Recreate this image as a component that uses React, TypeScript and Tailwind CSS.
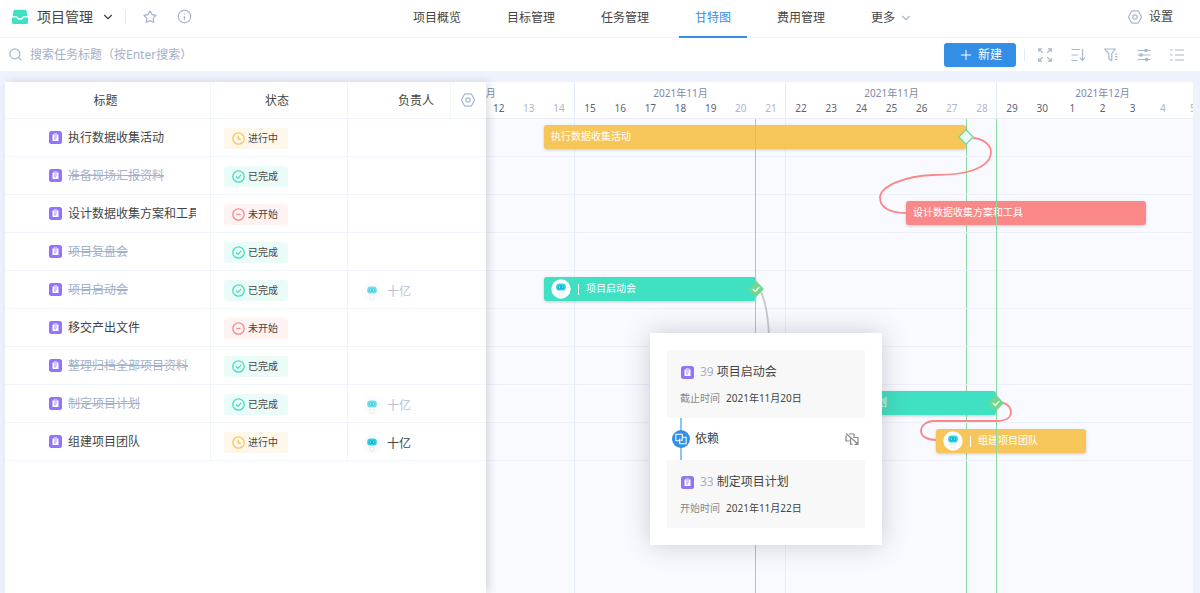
import { useState } from 'react'
import type { ReactNode } from 'react'
import { ChevronDown, Info, Plus, Search, Star } from 'lucide-react'

type Status = 'doing' | 'done' | 'todo'

interface Task {
  id: number
  title: string
  status: Status
  owner?: string
  bar?: { left: number; width: number; milestone?: boolean }
}

const tasks: Task[] = [
  { id: 31, title: '执行数据收集活动', status: 'doing', bar: { left: 58, width: 422, milestone: true } },
  { id: 32, title: '准备现场汇报资料', status: 'done' },
  { id: 34, title: '设计数据收集方案和工具', status: 'todo', bar: { left: 420, width: 240 } },
  { id: 35, title: '项目复盘会', status: 'done' },
  { id: 39, title: '项目启动会', status: 'done', owner: '十亿', bar: { left: 58, width: 212, milestone: true } },
  { id: 36, title: '移交产出文件', status: 'todo' },
  { id: 37, title: '整理归档全部项目资料', status: 'done' },
  { id: 33, title: '制定项目计划', status: 'done', owner: '十亿', bar: { left: 299, width: 211, milestone: true } },
  { id: 38, title: '组建项目团队', status: 'doing', owner: '十亿', bar: { left: 450, width: 150 } },
]

// the first week is scrolled half out of view, its hidden days stay blank
const weeks = [
  { month: '2021年11月', days: ['', '', '', '', '12', '13', '14'] },
  { month: '2021年11月', days: ['15', '16', '17', '18', '19', '20', '21'] },
  { month: '2021年11月', days: ['22', '23', '24', '25', '26', '27', '28'] },
  { month: '2021年12月', days: ['29', '30', '1', '2', '3', '4', '5'] },
]

const weekBox = [
  'w-[88px] justify-end',
  'w-[211px] border-l',
  'w-[211px] border-l',
  'min-w-0 flex-1 border-l',
]

const statusMap = {
  doing: { label: '进行中', pill: 'bg-[#fef8ec]', icon: 'text-[#f8c55a]', bar: 'bg-[#f7c65a]' },
  done: { label: '已完成', pill: 'bg-[#ebfcf8]', icon: 'text-[#40dfc0]', bar: 'bg-[#40e0c2]' },
  todo: { label: '未开始', pill: 'bg-[#fff2f2]', icon: 'text-[#fb8787]', bar: 'bg-[#fb8888]' },
}

const tabs = ['项目概览', '目标管理', '任务管理', '甘特图', '费用管理']

function LogoIcon() {
  return (
    <svg className="h-4 w-4" viewBox="0 0 16 16">
      <path d="M2.6 .8h10.800c.5 0 .9.300 1 .800L15.500 7.300H11.400c-.4 0-.8.300-1 .700-.4.900-1.200 1.400-2.400 1.400s-2-.5-2.400-1.400c-.2-.4-.6-.7-1-.7H.5l1.100-5.700c.1-.5.5-.8 1-.8z" fill="#40e0c2" />
      <path d="M0 8.500h4.400c.6 1.500 1.900 2.300 3.600 2.300s3-.8 3.600-2.300H16v5c0 .8-.7 1.500-1.500 1.500h-13C.7 15 0 14.300 0 13.500z" fill="#40e0c2" />
    </svg>
  )
}

function HexIcon() {
  return (
    <svg className="h-3.5 w-3.5" viewBox="0 0 14 14" fill="none" stroke="currentColor" strokeWidth="1.200" strokeLinejoin="round">
      <path d="M4.200 .9h5.600c.3 0 .5.100.7.400l2.700 5c.3.500.3.900 0 1.400l-2.700 5c-.2.300-.4.400-.7.400H4.200c-.3 0-.5-.1-.7-.4L.8 7.700c-.3-.5-.3-.9 0-1.400l2.700-5c.2-.3.400-.4.700-.4z" />
      <circle cx="7" cy="7" r="2.200" />
    </svg>
  )
}

function TaskIcon() {
  return (
    <svg className="h-[13px] w-[13px] shrink-0" viewBox="0 0 13 13">
      <rect width="13" height="13" rx="2.500" fill="#9373fd" />
      <path d="M3.500 3.500h1.300v-.9h3.400v.9h1.300v6.600h-6z" fill="#fff" />
      <path d="M5 3.900h3M5 6h3.100M5 7.900h2" stroke="#9373fd" strokeWidth=".8" />
    </svg>
  )
}

function StatusIcon({ status }: { status: Status }) {
  return (
    <svg
      className={`h-[13px] w-[13px] shrink-0 ${statusMap[status].icon}`}
      viewBox="0 0 13 13"
      fill="none"
      stroke="currentColor"
      strokeWidth="1.300"
    >
      <circle cx="6.500" cy="6.500" r="5.700" />
      {status === 'doing' && <path d="M6.200 3.700v3.200h2.700" strokeWidth="1.500" />}
      {status === 'done' && <path d="M4 6.500l1.900 1.900 3.300-3.500" />}
      {status === 'todo' && <path d="M4.400 6.500h4.200" />}
    </svg>
  )
}

function Avatar({ faded = false, fill = '#fafafa' }: { faded?: boolean; fill?: string }) {
  return (
    <svg className={`h-5 w-5 shrink-0 ${faded ? 'opacity-70' : ''}`} viewBox="0 0 20 20">
      <circle cx="10" cy="10" r="9.700" fill={fill} />
      <rect x="5.200" y="4.600" width="9.600" height="7" rx="3.200" fill="#2dd3e3" />
      <rect x="6.700" y="6.400" width="6.600" height="3.600" rx="1.800" fill="#13b3cf" />
      <path d="M8.400 7.500v1.200M11.600 7.500v1.200" stroke="#b5fbff" strokeWidth="1" />
      <path d="M7.800 13.300h4.400l-.5 3.200c-1 .7-2.400.7-3.400 0z" fill="#fff" stroke="#dde4ea" strokeWidth=".7" />
    </svg>
  )
}

function LinkIcon({ broken = false }: { broken?: boolean }) {
  return (
    <svg className={broken ? 'h-3.5 w-3.5' : 'h-3 w-3'} viewBox="0 0 14 14" fill="none" stroke="currentColor" strokeWidth="1.200">
      {broken ? (
        <path d="M4 2h5v3.500h4v6.800H9.500M1 3.500V9h3.500M5.500 6.500v5.700h2M1 1.500l12.500 11" />
      ) : (
        <path d="M5 9H1V1.500h7.500V5M8.500 5H13v7.500H5.500V9M5.500 9V6.500M8.500 5v3.500H6.500" />
      )}
    </svg>
  )
}

function ToolButton({ label, children }: { label: string; children: ReactNode }) {
  return (
    <button aria-label={label} className="text-[#a9b6cf]">
      <svg className="h-3.5 w-3.5" viewBox="0 0 14 14" fill="none" stroke="currentColor" strokeWidth="1.200">
        {children}
      </svg>
    </button>
  )
}

function Header({ active, onChange }: { active: string; onChange: (tab: string) => void }) {
  return (
    <header className="flex h-[38px] border-b border-[#edf2fc] bg-white">
      <div className="flex w-[397px] items-center pb-1 pl-3">
        <LogoIcon />
        <button className="ml-[9px] flex items-center gap-2 text-sm">
          项目管理
          <ChevronDown className="h-3.5 w-3.5" strokeWidth={2} />
        </button>
        <span className="ml-2.5 h-3.5 w-px bg-[#e3ebf8]" />
        <button aria-label="收藏" className="ml-[17px] text-[#a9b6cf]">
          <Star className="h-3.5 w-3.5" strokeWidth={2.2} />
        </button>
        <button aria-label="详情" className="ml-5 text-[#a9b6cf]">
          <Info className="h-[15px] w-[15px]" strokeWidth={2} />
        </button>
      </div>
      <nav className="flex h-[38px] gap-3.5">
        {tabs.map((tab) => (
          <button
            key={tab}
            onClick={() => onChange(tab)}
            className={`border-b-2 px-4 ${
              tab === active ? 'border-[#338fe5] text-[#338fe5]' : 'border-transparent'
            }`}
          >
            {tab}
          </button>
        ))}
        <button className="flex items-center gap-1 px-4 pb-0.5">
          更多
          <ChevronDown className="h-3.5 w-3.5 text-[#a9b6cf]" strokeWidth={2} />
        </button>
      </nav>
      <button className="mr-[27px] ml-auto flex items-center gap-[7px] pb-1">
        <span className="text-[#a9b6cf]">
          <HexIcon />
        </span>
        设置
      </button>
    </header>
  )
}

function Toolbar() {
  return (
    <div className="flex h-[33px] items-center bg-white pr-4 pl-2">
      <label htmlFor="task-search" className="text-[#a9b6cf]">
        <Search className="h-[15px] w-[15px]" strokeWidth={2} />
      </label>
      <input
        id="task-search"
        aria-label="搜索任务标题"
        placeholder="搜索任务标题（按Enter搜索）"
        className="ml-[7px] min-w-0 flex-1 outline-none placeholder:text-[#a3b0ca]"
      />
      <button className="flex h-6 w-[72px] items-center justify-center gap-1 rounded-[3px] bg-[#338fe5] text-white">
        <Plus className="h-4 w-4" strokeWidth={1.5} />
        新建
      </button>
      <span className="mx-2 h-3 w-px bg-[#e3ebf8]" />
      <div className="ml-[5px] flex gap-[19px]">
        <ToolButton label="全屏">
          <path d="M.8 4V.8H4M.8 .8l4 4M10 .8h3.200V4M13.200 .8l-4 4M.8 10v3.200H4M.8 13.200l4-4M13.200 10v3.200H10M13.200 13.200l-4-4" />
        </ToolButton>
        <ToolButton label="排序">
          <path d="M.5 1.500h8.500M.5 7H7M.5 12.500h6M11.500 1v11.500M8.700 9.700l2.800 2.800 2.500-2.800" />
        </ToolButton>
        <ToolButton label="筛选">
          <path d="M.7 1h10.600L7.800 5.700v7.100L4.800 11V5.700zM11 6h2.500M11 8.700h2.500M11 11.400h2.500" strokeLinejoin="round" />
        </ToolButton>
        <ToolButton label="设置视图">
          <path d="M.5 2.500h13M.5 7h13M.5 11.500h13" />
          <circle cx="9" cy="2.500" r="1.200" fill="currentColor" />
          <circle cx="4" cy="7" r="1.200" fill="currentColor" />
          <circle cx="9.500" cy="11.500" r="1.200" fill="currentColor" />
        </ToolButton>
        <ToolButton label="列表">
          <path d="M0 2h2.500M5 2h9M0 7h2.500M5 7h9M0 12h2.500M5 12h9" />
        </ToolButton>
      </div>
    </div>
  )
}

function TaskTable() {
  return (
    <div className="z-10 w-[481px] shrink-0 bg-white shadow-[3px_0_8px_rgba(60,70,90,0.18)]">
      <table className="w-full table-fixed border-separate border-spacing-0">
        <colgroup>
          <col className="w-[206px]" />
          <col className="w-[137px]" />
          <col className="w-[103px]" />
          <col />
        </colgroup>
        <thead>
          <tr className="h-[37px] *:border-b *:border-[#f0f4fd] *:font-normal">
            <th className="border-r pt-0.5 pr-1">标题</th>
            <th className="border-r pt-0.5 pr-1">状态</th>
            <th className="border-r pt-0.5 pr-4 text-right">负责人</th>
            <th>
              <button aria-label="列设置" className="block px-2.5 text-[#a9b6cf]">
                <HexIcon />
              </button>
            </th>
          </tr>
        </thead>
        <tbody>
          {tasks.map((task) => {
            const done = task.status === 'done'
            const s = statusMap[task.status]
            return (
              <tr key={task.id} className="h-[38px] *:border-b *:border-[#f0f4fd]">
                <td className="border-r pr-3.5">
                  <div className="ml-11 flex items-center gap-1.5">
                    <TaskIcon />
                    <span
                      className={`overflow-hidden whitespace-nowrap ${done ? 'text-[#a3b0ca] line-through' : ''}`}
                    >
                      {task.title}
                    </span>
                  </div>
                </td>
                <td className="border-r">
                  <div className={`mt-0.5 ml-[13px] flex h-[21px] w-16 items-center gap-[3px] rounded-[3px] pl-2 text-[10px] ${s.pill}`}>
                    <StatusIcon status={task.status} />
                    {s.label}
                  </div>
                </td>
                <td colSpan={2}>
                  {task.owner && (
                    <div className={`mt-1 ml-3.5 flex items-center gap-[5px] ${done ? 'text-[#b9c2d2]' : ''}`}>
                      <Avatar faded={done} />
                      {task.owner}
                    </div>
                  )}
                </td>
              </tr>
            )
          })}
        </tbody>
      </table>
    </div>
  )
}

function Bar({ task }: { task: Task }) {
  if (!task.bar) return null
  const { left, width } = task.bar
  return (
    <div
      className={`absolute top-1.5 flex h-6 items-center rounded-[3px] px-[7px] text-[10px] whitespace-nowrap text-white shadow-[0_1px_3px_rgba(80,90,110,0.3)] ${statusMap[task.status].bar}`}
      style={{ left, width }}
    >
      {task.owner && (
        <>
          <Avatar fill="#fff" />
          <span className="mx-[7px] h-[11px] w-px bg-white" />
        </>
      )}
      {task.title}
    </div>
  )
}

function Milestone({ task }: { task: Task }) {
  if (!task.bar?.milestone) return null
  const done = task.status === 'done'
  return (
    <svg
      className="absolute top-2.5 h-4 w-4 -translate-x-1/2"
      style={{ left: task.bar.left + task.bar.width }}
      viewBox="0 0 16 16"
    >
      <path d="M8 .8L15.200 8 8 15.200.8 8z" fill={done ? '#74d68f' : '#ebfcf4'} stroke="#74d68f" strokeWidth="1.300" />
      {done && <path d="M4.800 8l2.500 2.400 4-4.200" fill="none" stroke="#fff" strokeWidth="1.200" />}
    </svg>
  )
}

function LinkedTask({ id, title, label, date }: { id: number; title: string; label: string; date: string }) {
  return (
    <div className="h-[68px] bg-[#f8f8f8] px-[13px] pt-3.5">
      <div className="flex items-center leading-4">
        <span className="ml-px">
          <TaskIcon />
        </span>
        <span className="mr-[3px] ml-1.5 text-[#a3b0ca]">{id}</span>
        {title}
      </div>
      <div className="mt-2.5 flex gap-1.5 text-[10px] leading-4">
        <span className="text-[#888]">{label}</span>
        {date}
      </div>
    </div>
  )
}

function DependencyPopup() {
  return (
    <div className="absolute top-[214px] left-[164px] w-[232px] bg-white p-[17px] shadow-[0_0_24px_rgba(70,75,90,0.26)]">
      <LinkedTask id={39} title="项目启动会" label="截止时间" date="2021年11月20日" />
      <div className="flex h-[42px] items-center pr-1.5 pl-[5px]">
        <div className="relative flex h-full w-[18px] items-center">
          <span className="absolute left-2 h-full w-0.5 bg-[#8fc3f2]" />
          <span className="relative flex h-[18px] w-[18px] items-center justify-center rounded-full bg-[#338fe5] text-white">
            <LinkIcon />
          </span>
        </div>
        <span className="ml-[5px]">依赖</span>
        <button aria-label="解除依赖" className="ml-auto text-[#888]">
          <LinkIcon broken />
        </button>
      </div>
      <LinkedTask id={33} title="制定项目计划" label="开始时间" date="2021年11月22日" />
    </div>
  )
}

function Timeline() {
  return (
    <div className="flex min-w-0 flex-1 flex-col overflow-hidden bg-[#f9faff]">
      <div className="flex h-[37px] border-b border-[#ebedf0] bg-white text-[10px]">
        {weeks.map((week, i) => (
          <div key={i} className={`flex shrink-0 overflow-hidden border-[#e3eaf8] ${weekBox[i]}`}>
            <div className="w-[211px] shrink-0 pt-1">
              <div className="text-center leading-[15px] text-[#7d8aa8]">{week.month}</div>
              <div className="flex leading-[15px]">
                {week.days.map((day, d) => (
                  <span key={d} className={`flex-1 text-center ${d > 4 ? 'text-[#a9b6cf]' : 'text-[#5c6478]'}`}>
                    {day}
                  </span>
                ))}
              </div>
            </div>
          </div>
        ))}
      </div>

      <div className="relative flex-1">
        <div className="absolute inset-0 flex">
          {weeks.map((_, i) => (
            <div key={i} className={`border-[#e6edfa] ${weekBox[i]}`} />
          ))}
        </div>
        <span className="absolute inset-y-0 left-[480px] w-px bg-[#87dca0]" />

        {tasks.map((task) => (
          <div key={task.id} className="relative h-[38px] border-b border-[#ebf0fb]">
            <Bar task={task} />
          </div>
        ))}

        <span className="absolute inset-y-0 left-[269px] w-px bg-[#87dca0]" />
        <span className="absolute inset-y-0 left-[510px] w-px bg-[#87dca0]" />

        {/* dependency arrows */}
        <svg className="absolute inset-0 h-full w-full" fill="none" stroke="#fb8888" strokeWidth="1.800">
          <path d="M487 19C499 20 505 27 505 33C505 43 496 49 481 53C469 56 459 56 447 56C419 57 394 67 394 79C394 89 405 94 420 94" />
          <path d="M517 284C522 285 525 289 525 293C525 299 519 302 511 302H448C440 302 435 307 435 312C435 317 441 321 450 321" />
          <path d="M275 173C280 183 282 198 283 216" stroke="#c8c8c8" />
        </svg>

        <div className="absolute inset-x-0 top-0">
          {tasks.map((task) => (
            <div key={task.id} className="relative h-[38px]">
              <Milestone task={task} />
            </div>
          ))}
        </div>

        <DependencyPopup />
      </div>
    </div>
  )
}

export default function App() {
  const [active, setActive] = useState('甘特图')

  return (
    <div className="flex min-h-screen flex-col bg-[#edf2fc] font-['Noto_Sans','Noto_Sans_CJK_SC',sans-serif] text-xs text-[#444]">
      <Header active={active} onChange={setActive} />
      <Toolbar />
      <main className="mt-[11px] mr-[7px] ml-[5px] flex flex-1">
        <TaskTable />
        <Timeline />
      </main>
    </div>
  )
}
